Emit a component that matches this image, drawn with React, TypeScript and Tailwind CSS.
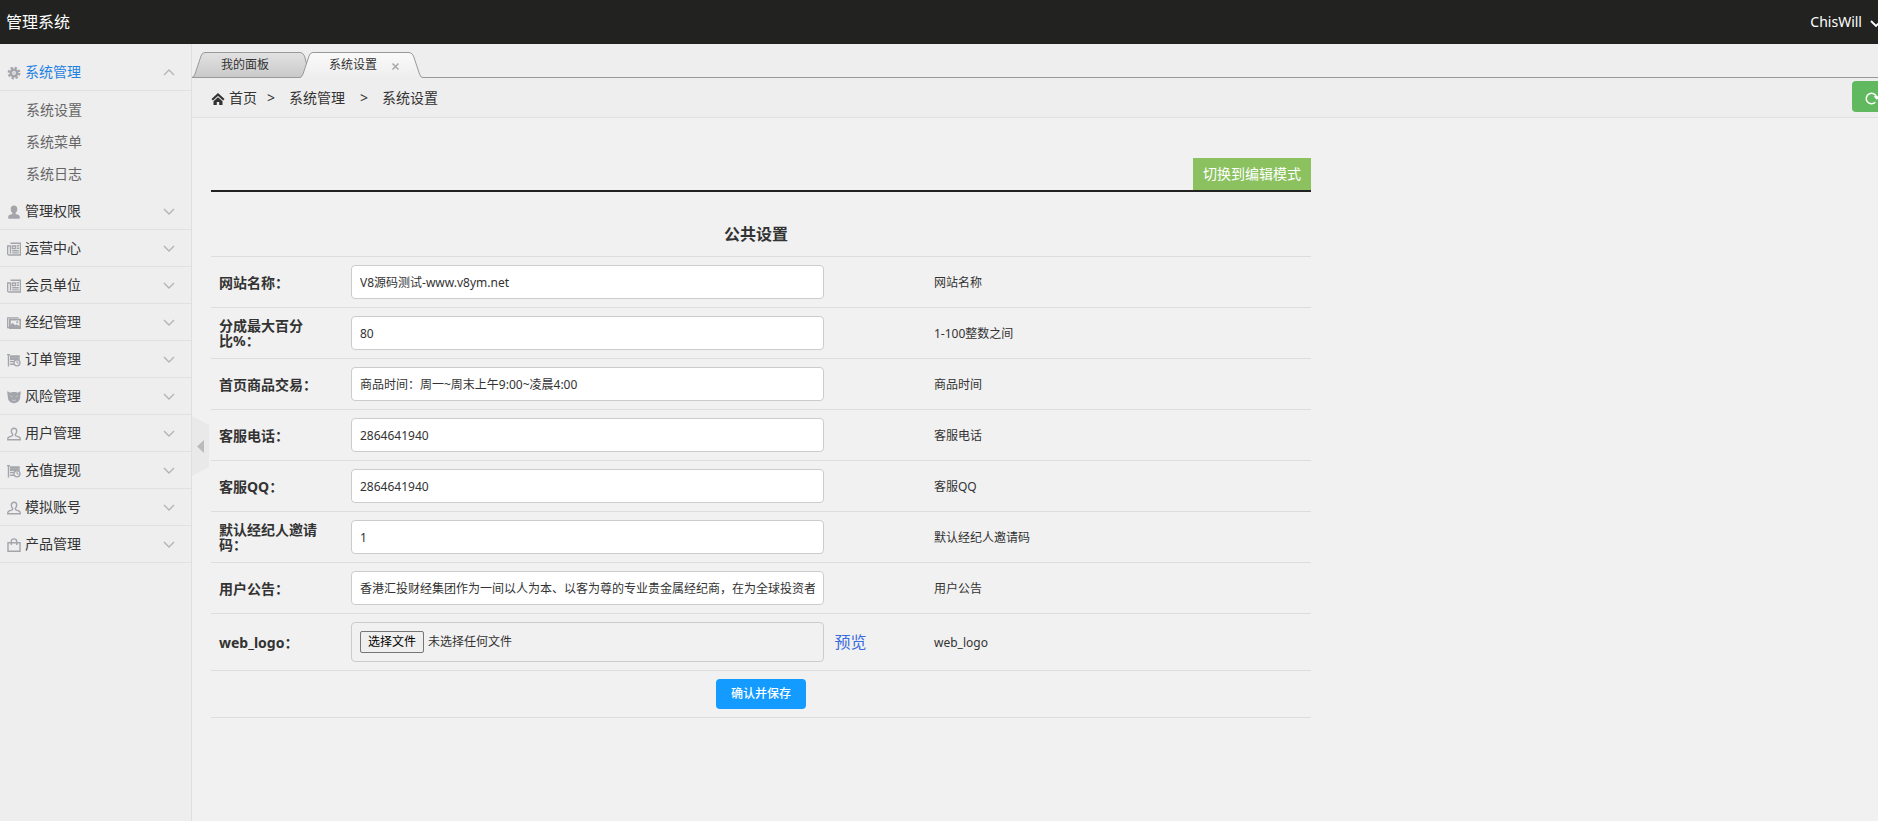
import type { ReactNode } from 'react'

type MenuItem = { label: string; icon: ReactNode; children?: string[] }

type Field = { id: string; label: string; value: string; hint: string }

function Icon({ children }: { children: ReactNode }) {
  return (
    <svg viewBox="0 0 14 14" className="mt-0.5 h-3.5 w-3.5 shrink-0 text-[#a3a5aa]" fill="none" stroke="currentColor" aria-hidden="true">
      {children}
    </svg>
  )
}

const gearIcon = (
  <Icon>
    <circle cx="7" cy="7" r="3.2" strokeWidth="2.6" />
    <circle cx="7" cy="7" r="5.3" strokeWidth="2.2" strokeDasharray="2.3 1.86" />
    <circle cx="7" cy="7" r="0.7" fill="currentColor" stroke="none" />
  </Icon>
)

const personIcon = (
  <Icon>
    <path
      d="M7 .5c2.2 0 3.3 1.5 3.3 3.5 0 1.800-.7 3.200-1.700 3.900v1.100c2.600.5 4.200 1.200 4.200 2.900v.8c0 .6-.4 1-1 1H2.200c-.6 0-1-.4-1-1v-.8c0-1.700 1.600-2.400 4.200-2.900V7.900C4.400 7.200 3.700 5.800 3.700 4 3.700 2 4.800.5 7 .5z"
      fill="currentColor"
      stroke="none"
    />
  </Icon>
)

const newsIcon = (
  <Icon>
    <path d="M3.500 1.200h9.900v11.800H2.200c-1 0-1.600-.7-1.600-1.600V4h2.900v7.500" strokeWidth="1.400" />
    <path d="M5.500 4h3v2.600h-3zM9.800 3.700H12M9.800 6.300H12M5.200 8.700h6.600M5.200 10.900h6.600" strokeWidth="1.400" />
  </Icon>
)

const pictureIcon = (
  <Icon>
    <path d="M2 11.500H.7v-9.700h10.800" strokeWidth="1.300" />
    <path d="M2.900 3.700h10.400v8.300H2.900z" strokeWidth="1.800" />
    <path d="M3 12V9.500l2.700-2.800 2.300 2.500 1.500-1 3.800 2.300V12z" fill="currentColor" stroke="none" />
    <circle cx="10.200" cy="6.300" r="1" fill="currentColor" stroke="none" />
  </Icon>
)

const orderIcon = (
  <Icon>
    <path d="M1.500 1v12.500M0 1.600h3" strokeWidth="1.400" />
    <path d="M3 2.500h9.800v4.700H3z" fill="currentColor" stroke="none" opacity="0.850" />
    <path d="M3 3.200h9.500M3 6h8M3 8.600h4M3 11.200h4" strokeWidth="1.400" />
    <circle cx="10" cy="9.800" r="3" strokeWidth="1.300" className="fill-[#eeeeef]" />
    <path d="M10 8v2h1.700" strokeWidth="1" />
  </Icon>
)

const devilIcon = (
  <Icon>
    <path
      d="M.6.800C1.500 2.400 2.500 2.700 3.900 2.400c2-.6 4.200-.6 6.200 0 1.400.3 2.400 0 3.300-1.600.5 2 .3 3.600-.2 4.800.5 4.500-2.300 7.600-6.200 7.600S.3 10.100.8 5.600C.3 4.400.1 2.800.6.8z"
      fill="currentColor"
      stroke="none"
    />
    <path d="m3.500 5.900 1.900.9M10.500 5.900 8.600 6.800M5 10c1.200.5 2.800.5 4 0" strokeWidth="0.700" className="stroke-[#d8d8da]" />
  </Icon>
)

const userIcon = (
  <Icon>
    <path
      d="M7 1.200c1.700 0 2.700 1.200 2.700 2.900 0 1.400-.6 2.400-1.300 3.100v1.200c0 1 4.800 1 4.800 3v1.400H.8v-1.400c0-2 4.800-2 4.800-3V7.200C4.900 6.500 4.300 5.500 4.300 4.100 4.300 2.400 5.300 1.200 7 1.200z"
      strokeWidth="1.400"
    />
  </Icon>
)

const bagIcon = (
  <Icon>
    <path d="M1 4.700h12v8.500H1z" strokeWidth="1.400" />
    <path d="M4.300 7V3.400C4.300 1.800 5.400.9 7 .9s2.700.9 2.700 2.500V7" strokeWidth="1.400" />
  </Icon>
)

const menu: MenuItem[] = [
  { label: '系统管理', icon: gearIcon, children: ['系统设置', '系统菜单', '系统日志'] },
  { label: '管理权限', icon: personIcon },
  { label: '运营中心', icon: newsIcon },
  { label: '会员单位', icon: newsIcon },
  { label: '经纪管理', icon: pictureIcon },
  { label: '订单管理', icon: orderIcon },
  { label: '风险管理', icon: devilIcon },
  { label: '用户管理', icon: userIcon },
  { label: '充值提现', icon: orderIcon },
  { label: '模拟账号', icon: userIcon },
  { label: '产品管理', icon: bagIcon },
]

const fields: Field[] = [
  { id: 'web_name', label: '网站名称：', value: 'V8源码测试-www.v8ym.net', hint: '网站名称' },
  { id: 'max_point', label: '分成最大百分比%：', value: '80', hint: '1-100整数之间' },
  { id: 'trade_time', label: '首页商品交易：', value: '商品时间：周一~周末上午9:00~凌晨4:00', hint: '商品时间' },
  { id: 'service_tel', label: '客服电话：', value: '2864641940', hint: '客服电话' },
  { id: 'service_qq', label: '客服QQ：', value: '2864641940', hint: '客服QQ' },
  { id: 'invite_code', label: '默认经纪人邀请码：', value: '1', hint: '默认经纪人邀请码' },
  {
    id: 'notice',
    label: '用户公告：',
    value: '香港汇投财经集团作为一间以人为本、以客为尊的专业贵金属经纪商，在为全球投资者',
    hint: '用户公告',
  },
]

function Chevron({ up }: { up?: boolean }) {
  return (
    <svg viewBox="0 0 12 7" className="h-[7px] w-3 text-[#b4b4b4]" fill="none" stroke="currentColor" strokeWidth="1.400" aria-hidden="true">
      <path d={up ? 'M1 6l5-5 5 5' : 'M1 1l5 5 5-5'} />
    </svg>
  )
}

function Sidebar() {
  return (
    <nav className="w-48 shrink-0 border-r border-[#dfdfdf] bg-[#eeeeef] pt-2.5">
      {menu.map((item) => (
        <div key={item.label}>
          <button
            type="button"
            className="flex h-[37px] w-full items-center border-b border-[#e0e0e1] pr-4 pl-[7px] text-left"
          >
            {item.icon}
            <span className={item.children ? 'ml-1 flex-1 text-[#1f82e0]' : 'ml-1 flex-1'}>{item.label}</span>
            <Chevron up={!!item.children} />
          </button>
          {item.children && (
            <ul className="py-[3px]">
              {item.children.map((child) => (
                <li key={child}>
                  <a href="#" className="block pl-[26px] leading-8 text-[#666]">
                    {child}
                  </a>
                </li>
              ))}
            </ul>
          )}
        </div>
      ))}
    </nav>
  )
}

function Tabs() {
  return (
    <div className="flex h-[34px] items-end border-b border-[#999] text-xs">
      <button type="button" className="relative -mb-px h-[26px] w-[118px] pl-[29px] text-left">
        <svg viewBox="0 0 118 26" className="absolute inset-0 h-full w-full" aria-hidden="true">
          <defs>
            <linearGradient id="tab-idle" x1="0" y1="0" x2="0" y2="1">
              <stop offset="0" stopColor="#e2e2e2" />
              <stop offset="1" stopColor="#c9c9c9" />
            </linearGradient>
          </defs>
          <path d="M0 25.500Q2 25 3 22L9 4Q10 .5 13 .5H108Q111 .5 112.500 4L118 25.500z" fill="url(#tab-idle)" stroke="#999" />
        </svg>
        <span className="relative">我的面板</span>
      </button>
      <div className="relative -mb-px -ml-[10px] flex h-[26px] w-[123px] items-center pr-[23px] pl-[29px]">
        <svg viewBox="0 0 123 26" className="absolute inset-0 h-full w-full" aria-hidden="true">
          <defs>
            <linearGradient id="tab-active" x1="0" y1="0" x2="0" y2="1">
              <stop offset="0" stopColor="#fafafa" />
              <stop offset="1" stopColor="#eeeeee" />
            </linearGradient>
          </defs>
          <path d="M0 26Q2 25 3 22L9 4Q10 .5 13 .5H109Q112 .5 113.500 4L119.500 22Q120.500 25.500 123 25.500V26z" fill="url(#tab-active)" />
          <path d="M0 25.500Q2 25 3 22L9 4Q10 .5 13 .5H109Q112 .5 113.500 4L119.500 22Q120.500 25.500 123 25.500" fill="none" stroke="#999" />
        </svg>
        <button type="button" className="relative flex-1 text-left">
          系统设置
        </button>
        <button type="button" aria-label="关闭" className="relative text-[#aaa]">
          <svg viewBox="0 0 9 9" className="mt-0.5 h-[9px] w-[9px]" stroke="currentColor" strokeWidth="1.600" aria-hidden="true">
            <path d="M1.500 1.500l6 6M7.500 1.500l-6 6" />
          </svg>
        </button>
      </div>
    </div>
  )
}

function Breadcrumb() {
  return (
    <div className="flex h-10 items-center overflow-hidden border-b border-[#e0e0e0] pl-[19px]">
      <svg viewBox="0 0 14 12" className="mt-0.5 h-3 w-3.5" fill="none" stroke="#333" aria-hidden="true">
        <path d="M1.200 6.800 7 1.500l5.800 5.300" strokeWidth="2.200" />
        <path d="M7 4.200 2.500 8.200V12h3.300V9h2.400v3h3.300V8.200z" fill="#333" stroke="none" />
      </svg>
      <nav className="flex flex-1">
        <a href="#" className="ml-1">首页</a>
        <span className="mr-3.5 ml-2.5">&gt;</span>
        <a href="#">系统管理</a>
        <span className="mr-3.5 ml-[15px]">&gt;</span>
        <span>系统设置</span>
      </nav>
      <button
        type="button"
        aria-label="刷新"
        className="-mr-4 mb-0.5 flex h-[31px] w-[42px] shrink-0 items-center rounded bg-[#60b95f] pl-3"
      >
        <svg viewBox="0 0 16 16" className="mt-0.5 h-4 w-4" fill="none" stroke="#fff" strokeWidth="1.500" aria-hidden="true">
          <path d="M11.300 12.300A5.300 5.300 0 1 1 12.600 7" />
          <path d="M9.500 6.200h6L12.700 9.800z" fill="#fff" stroke="none" />
        </svg>
      </button>
    </div>
  )
}

function SettingsForm() {
  return (
    <form className="mx-[19px] mt-10 max-w-[1100px]">
      <div className="flex justify-end border-b-2 border-[#222]">
        <button type="button" className="h-8 bg-[#8bc15f] px-2.5 text-white">
          切换到编辑模式
        </button>
      </div>
      <table className="w-full table-fixed border-separate border-spacing-0 text-xs">
        <colgroup>
          <col className="w-[12%]" />
          <col className="w-[53%]" />
          <col />
        </colgroup>
        <thead>
          <tr>
            <th colSpan={3} className="h-[65px] border-b border-[#ddd] pt-5 pr-2.5 text-base font-bold">
              公共设置
            </th>
          </tr>
        </thead>
        <tbody>
          {fields.map((field) => (
            <tr key={field.id}>
              <th className="border-b border-[#ddd] px-2 text-left text-sm leading-[15px] font-bold">
                <label htmlFor={field.id} className="block">{field.label}</label>
              </th>
              <td className="border-b border-[#ddd] p-2">
                <input
                  id={field.id}
                  type="text"
                  defaultValue={field.value}
                  className="block h-[34px] w-5/6 rounded border border-[#ccc] bg-white px-2"
                />
              </td>
              <td className="border-b border-[#ddd] px-2 pt-0.5">{field.hint}</td>
            </tr>
          ))}
          <tr>
            <th className="border-b border-[#ddd] px-2 text-left text-sm leading-[15px] font-bold">
              <label htmlFor="web_logo" className="block">web_logo：</label>
            </th>
            <td className="border-b border-[#ddd] p-2">
              <div className="flex items-center">
                <label
                  htmlFor="web_logo"
                  className="relative flex h-10 w-5/6 items-center rounded border border-[#ccc] px-2"
                >
                  <input id="web_logo" type="file" className="sr-only" />
                  <span className="flex h-[22px] items-center rounded-xs border border-[#767676] bg-[#efefef] px-[7px] text-black">
                    选择文件
                  </span>
                  <span className="ml-1">未选择任何文件</span>
                </label>
                <a href="#" className="ml-[11px] text-base text-[#3a6be0]">
                  预览
                </a>
              </div>
            </td>
            <td className="border-b border-[#ddd] px-2 pt-0.5">web_logo</td>
          </tr>
          <tr>
            <td colSpan={3} className="border-b border-[#ddd] p-2 text-center">
              <button type="submit" className="mx-auto block h-[30px] w-[90px] rounded bg-[#149bff] font-medium text-white">
                确认并保存
              </button>
            </td>
          </tr>
        </tbody>
      </table>
    </form>
  )
}

export default function App() {
  return (
    <div className="flex min-h-screen flex-col bg-[#f1f1f1] font-['Noto_Sans','Noto_Sans_CJK_SC',sans-serif] text-sm text-[#333]">
      <header className="flex h-11 items-center justify-between overflow-hidden bg-[#222321] pl-1.5 text-white">
        <h1 className="text-base">管理系统</h1>
        <button type="button" className="-mr-1 flex items-center gap-2">
          ChisWill
          <svg viewBox="0 0 12 8" className="mt-1 h-2 w-3" fill="none" stroke="currentColor" strokeWidth="1.800" aria-hidden="true">
            <path d="M1 1l5 5 5-5" />
          </svg>
        </button>
      </header>
      <div className="relative flex flex-1">
        <Sidebar />
        <main className="min-w-0 flex-1">
          <div className="bg-[#eeeeee]">
            <Tabs />
            <Breadcrumb />
          </div>
          <SettingsForm />
        </main>
        <button type="button" aria-label="收起菜单" className="absolute top-[372px] left-48">
          <svg viewBox="0 0 18 60" className="block h-[60px] w-[18px]" aria-hidden="true">
            <path d="M0 0l17 9v42L0 60z" fill="#e9e9e9" />
            <path d="M12 24v13l-7-6.500z" fill="#bbb" />
          </svg>
        </button>
      </div>
    </div>
  )
}
